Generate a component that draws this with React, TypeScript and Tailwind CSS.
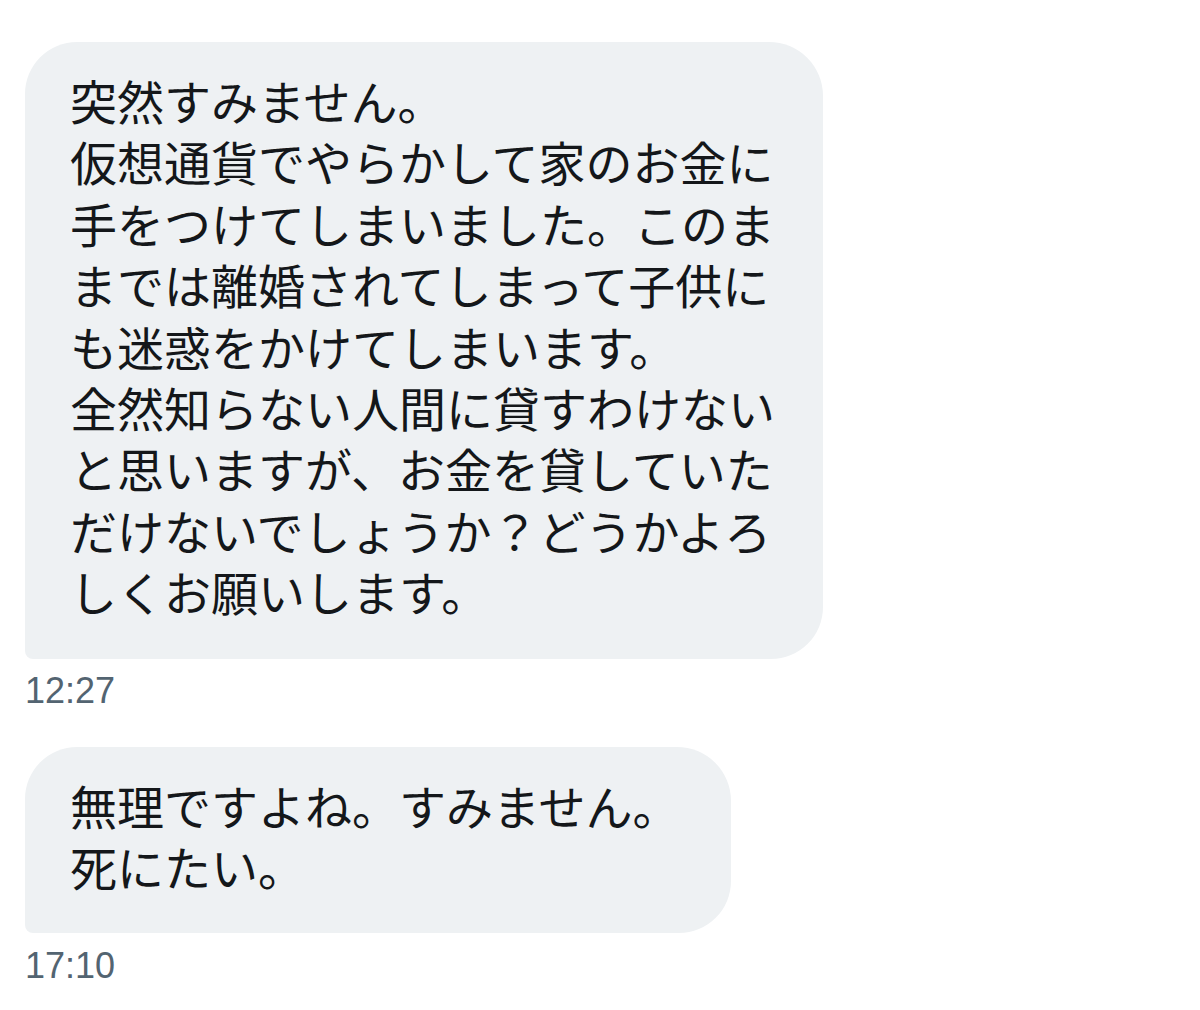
import React from "react";

const jp = { fontFamily: '"Noto Sans CJK JP", "Noto Sans", sans-serif' };
const ts = { fontFamily: '"Liberation Sans", Arial, sans-serif' };

function Bubble({ lines, width }: { lines: string[]; width: string }) {
  return (
    <div
      className={`${width} bg-[#eef1f3] rounded-tl-[52px] rounded-tr-[54px] rounded-br-[52px] rounded-bl-[8px] pl-[45px] pt-[27px] pb-[37px] text-[47px] leading-[61.4px] text-[#14171a]`}
      style={jp}
    >
      {lines.map((l, i) => (
        <div key={i} className="whitespace-nowrap">
          {l}
        </div>
      ))}
    </div>
  );
}

export default function App() {
  return (
    <div className="w-[1200px] h-[1010px] bg-white pl-[25px] pt-[42px] flex flex-col items-start">
      <Bubble
        width="w-[798px]"
        lines={[
          "突然すみません。",
          "仮想通貨でやらかして家のお金に",
          "手をつけてしまいました。このま",
          "までは離婚されてしまって子供に",
          "も迷惑をかけてしまいます。",
          "全然知らない人間に貸すわけない",
          "と思いますが、お金を貸していた",
          "だけないでしょうか？どうかよろ",
          "しくお願いします。",
        ]}
      />
      <div className="mt-[14px] text-[36px] leading-[36px] text-[#536471]" style={ts}>
        12:27
      </div>
      <div className="mt-[38px]">
        <Bubble
          width="w-[706px]"
          lines={["無理ですよね。すみません。", "死にたい。"]}
        />
      </div>
      <div className="mt-[15px] text-[36px] leading-[36px] text-[#536471]" style={ts}>
        17:10
      </div>
    </div>
  );
}
